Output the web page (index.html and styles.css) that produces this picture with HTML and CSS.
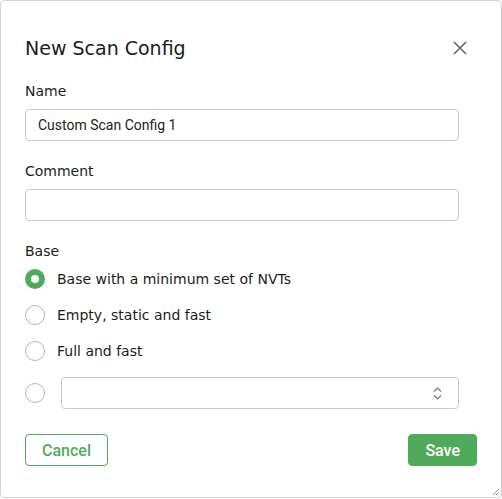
FILE: index.html
```html
<!DOCTYPE html>
<html lang="en">
<head>
<meta charset="utf-8">
<title>New Scan Config</title>
<link rel="stylesheet" href="styles.css">
</head>
<body>
<div class="dialog">
  <div class="header">
    <h1 class="title">New Scan Config</h1>
    <button class="close" aria-label="Close">
      <svg width="14" height="14" viewBox="0 0 14 14"><path d="M1 1 L13 13 M13 1 L1 13" stroke="#666" stroke-width="1.6" fill="none"/></svg>
    </button>
  </div>
  <div class="body">
    <div class="group">
      <div class="label">Name</div>
      <div class="input">Custom Scan Config 1</div>
    </div>
    <div class="group">
      <div class="label">Comment</div>
      <div class="input"></div>
    </div>
    <div class="group">
      <div class="label label-tight">Base</div>
      <div class="radios">
        <div class="radio-row"><span class="radio checked"></span><span class="radio-text">Base with a minimum set of NVTs</span></div>
        <div class="radio-row"><span class="radio"></span><span class="radio-text">Empty, static and fast</span></div>
        <div class="radio-row"><span class="radio"></span><span class="radio-text">Full and fast</span></div>
        <div class="radio-row select-row"><span class="radio"></span>
          <div class="select">
            <svg width="9" height="13" viewBox="0 0 9 13"><path d="M1 4.5 L4.5 1 L8 4.5 M1 8.5 L4.5 12 L8 8.5" stroke="#777" stroke-width="1.2" fill="none"/></svg>
          </div>
        </div>
      </div>
    </div>
  </div>
  <div class="footer">
    <button class="btn btn-outline">Cancel</button>
    <button class="btn btn-fill">Save</button>
  </div>
  <svg class="grip" width="8" height="8" viewBox="0 0 8 8"><path d="M7 1 L1 7 M7 4 L4 7" stroke="#999" stroke-width="1" fill="none"/></svg>
</div>
</body>
</html>
```

FILE: styles.css
```css
html, body {
  margin: 0;
  padding: 0;
  background: #fff;
}

.dialog {
  position: relative;
  box-sizing: border-box;
  width: 502px;
  height: 498px;
  border: 1px solid #d4d4d4;
  border-radius: 4px;
  padding: 0 24px;
  display: flex;
  flex-direction: column;
  font-family: "DejaVu Sans", sans-serif;
  color: #1c1c1c;
}

.header {
  display: flex;
  align-items: center;
  justify-content: space-between;
  padding-top: 35px;
  margin-right: 5px;
  margin-bottom: 21px;
}

.title {
  margin: 0;
  font-size: 19px;
  font-weight: normal;
  line-height: 24px;
}

.close {
  width: 24px;
  height: 24px;
  padding: 0;
  border: 0;
  background: none;
  display: flex;
  align-items: center;
  justify-content: center;
}

.body {
  margin-right: 18px;
}

.group {
  margin-bottom: 20px;
}

.label {
  font-size: 14px;
  line-height: 20px;
  margin-bottom: 8px;
}

.label-tight {
  margin-bottom: 0;
}

.input {
  box-sizing: border-box;
  height: 32px;
  border: 1px solid #c8c8c8;
  border-radius: 4px;
  padding: 0 12px;
  font-family: Roboto, sans-serif;
  font-size: 14px;
  line-height: 30px;
  color: #222;
}

.radios {
  display: flex;
  flex-direction: column;
}

.radio-row {
  display: flex;
  align-items: center;
  height: 36px;
}

.radio {
  box-sizing: border-box;
  width: 20px;
  height: 20px;
  border-radius: 50%;
  border: 1px solid #b4b4b4;
  background: #fff;
  flex: none;
}

.radio.checked {
  border: 6px solid #4fab5a;
}

.radio-text {
  margin-left: 12px;
  font-size: 14px;
  line-height: 20px;
}

.select-row {
  height: 32px;
  padding-top: 8px;
}

.select {
  flex: 1;
  box-sizing: border-box;
  height: 32px;
  margin-left: 16px;
  border: 1px solid #c8c8c8;
  border-radius: 4px;
  display: flex;
  align-items: center;
  justify-content: flex-end;
  padding-right: 16px;
}

.footer {
  display: flex;
  justify-content: space-between;
  margin-top: 5px;
}

.btn {
  box-sizing: border-box;
  height: 32px;
  border-radius: 4px;
  font-family: Roboto, sans-serif;
  font-weight: 500;
  font-size: 16px;
  padding: 0 16px;
  border: 1px solid #4fab5a;
}

.btn-outline {
  background: #fff;
  color: #4fab5a;
}

.btn-fill {
  background: #4fab5a;
  color: #fff;
}

.grip {
  position: absolute;
  right: 1px;
  bottom: 1px;
}
```
